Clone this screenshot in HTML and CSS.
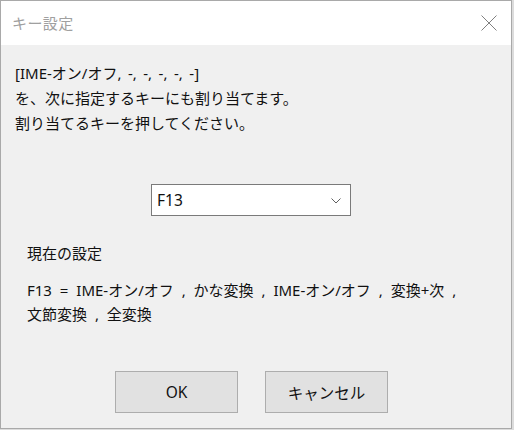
FILE: index.html
```html
<!DOCTYPE html>
<html lang="ja">
<head>
<meta charset="utf-8">
<title>キー設定</title>
<link rel="stylesheet" href="styles.css">
</head>
<body>
<div class="window">
  <div class="titlebar">
    <span class="title">キー設定</span>
    <span class="close" aria-label="閉じる">
      <svg width="16" height="16" viewBox="0 0 16 16"><path d="M0.5 0.5 L15.5 15.5 M15.5 0.5 L0.5 15.5" stroke="#808080" stroke-width="1" fill="none"/></svg>
    </span>
  </div>
  <div class="content">
    <div class="message">
      <div>[IME-オン/オフ, -, -, -, -, -]</div>
      <div>を、次に指定するキーにも割り当てます。</div>
      <div>割り当てるキーを押してください。</div>
    </div>
    <div class="combo-row">
      <div class="combo">
        <span class="combo-value">F13</span>
        <svg class="chevron" width="10" height="6" viewBox="0 0 10 6"><path d="M0.5 0.5 L5 5 L9.5 0.5" stroke="#606060" stroke-width="1" fill="none"/></svg>
      </div>
    </div>
    <div class="current-label">現在の設定</div>
    <div class="current-value">F13 = IME-オン/オフ , かな変換 , IME-オン/オフ , 変換+次 ,<br>文節変換 , 全変換</div>
    <div class="buttons">
      <button class="btn">OK</button>
      <button class="btn">キャンセル</button>
    </div>
  </div>
</div>
</body>
</html>
```
FILE: styles.css
```css
html, body {
  margin: 0;
  padding: 0;
}
body {
  width: 514px;
  height: 430px;
  background: #dcdcdc;
  font-family: "Noto Sans", "Noto Sans CJK JP", sans-serif;
  overflow: hidden;
}
.window {
  width: 510px;
  height: 427px;
  border: 1px solid #a9a9a9;
  background: #f0f0f0;
  display: flex;
  flex-direction: column;
}
.titlebar {
  height: 44px;
  background: #ffffff;
  display: flex;
  align-items: center;
  justify-content: space-between;
  padding: 0 14px 0 11px;
  flex: none;
}
.title {
  font-size: 15px;
  font-weight: 400;
  color: #a0a0a0;
  letter-spacing: 0.4px;
  margin-top: -1px;
}
.close {
  display: flex;
  margin-top: -1px;
}
.content {
  flex: 1;
  display: flex;
  flex-direction: column;
  padding: 16px 0 0 14px;
  color: #111;
  font-size: 15px;
  font-weight: 400;
  word-spacing: 2.6px;
}
.message {
  line-height: 25px;
}
.combo-row {
  margin-top: 48px;
  padding-left: 136px;
}
.combo {
  height: 30px;
  border: 1px solid #7a7a7a;
  background: #fff;
  display: flex;
  align-items: center;
  justify-content: space-between;
  padding: 0 9px 0 5px;
  box-sizing: content-box;
  width: 184px;
  font-size: 15.5px;
}
.chevron {
  margin-top: 1px;
}
.current-label {
  margin-top: 25px;
  padding-left: 12px;
  line-height: 25px;
}
.current-value {
  margin-top: 12px;
  padding-left: 12px;
  line-height: 24px;
  word-spacing: 4px;
}
.buttons {
  margin-top: 45px;
  padding-left: 100px;
  display: flex;
  gap: 27px;
}
.btn {
  width: 123px;
  height: 42px;
  margin: 0;
  background: #e1e1e1;
  border: 1px solid #adadad;
  font-family: inherit;
  font-size: 15.5px;
  font-weight: 400;
  color: #111;
  padding: 0;
}
```
